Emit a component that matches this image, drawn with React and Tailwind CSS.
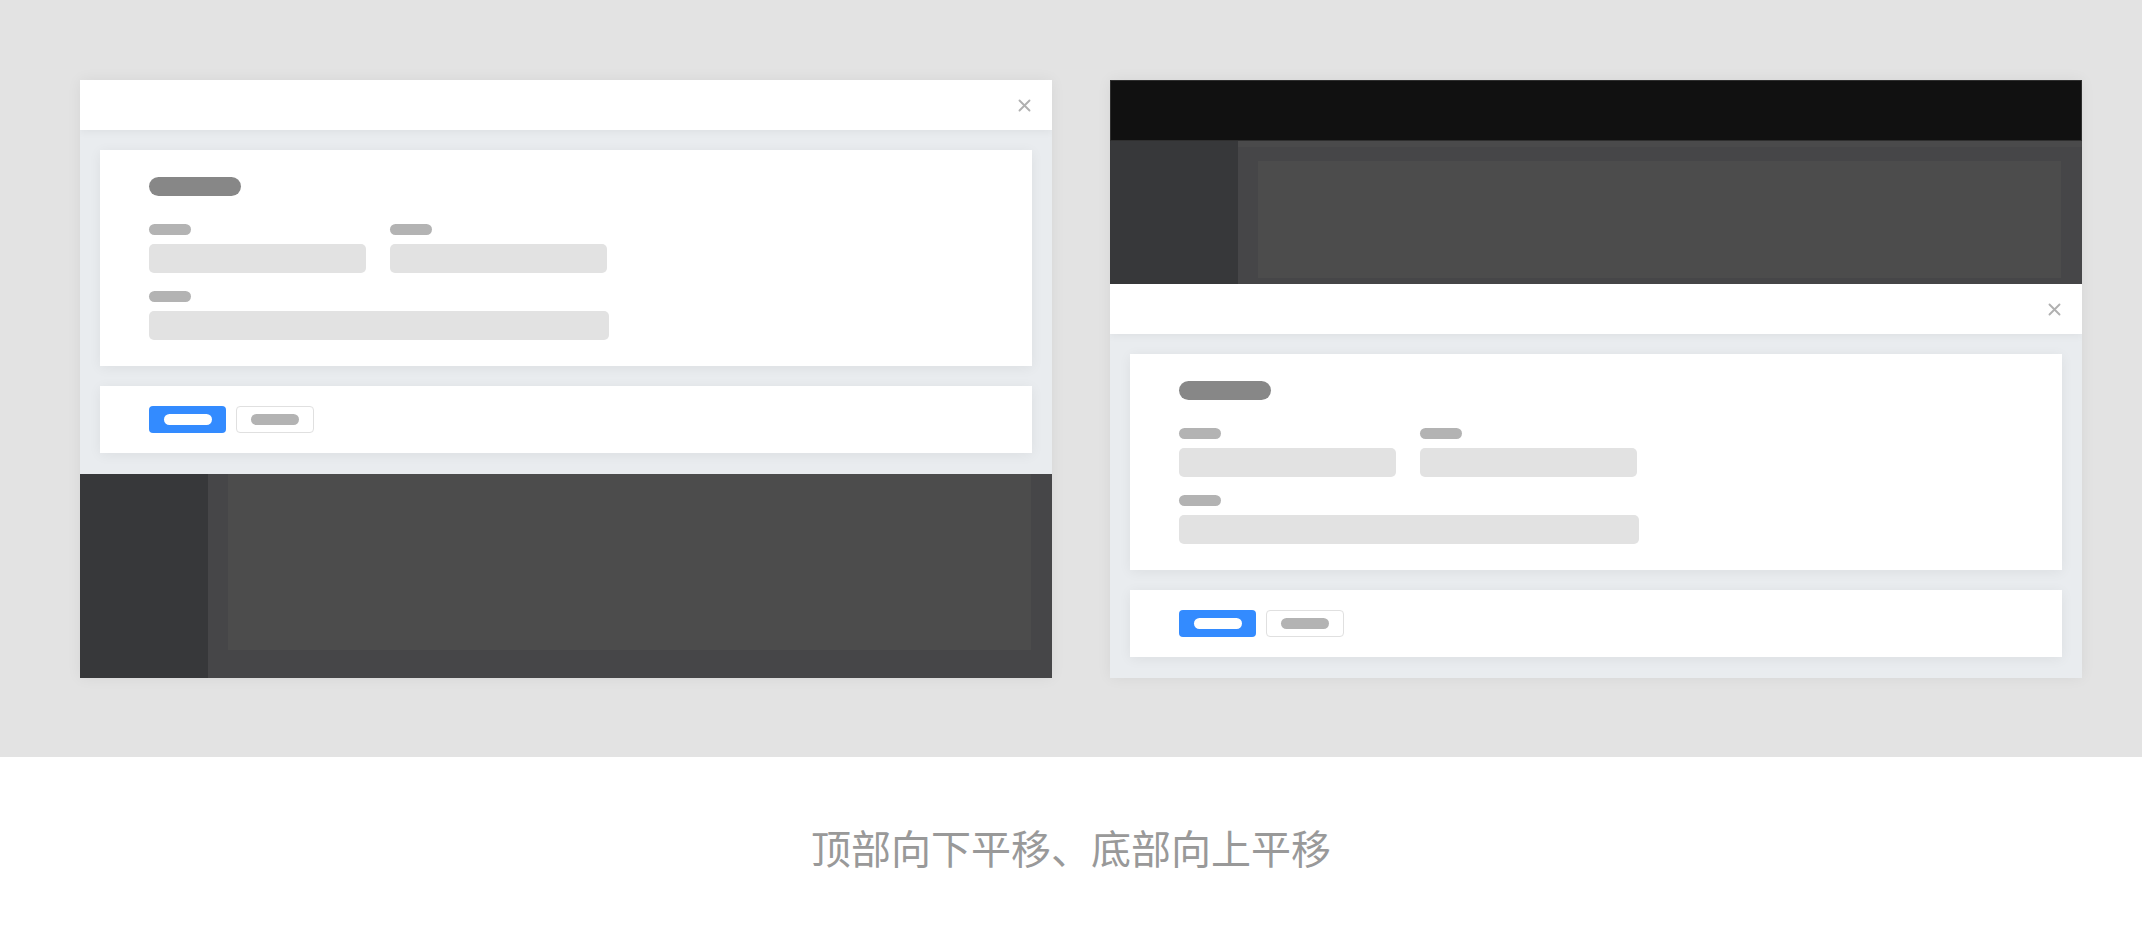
import React from "react";

function CloseIcon() {
  return (
    <svg width="13" height="13" viewBox="0 0 13 13" fill="none">
      <path d="M1.5 1.5L11.5 11.5M11.5 1.5L1.5 11.5" stroke="#b0b0b0" strokeWidth="1.9" strokeLinecap="round" />
    </svg>
  );
}

function Field({ wide }) {
  return (
    <div className="flex flex-col gap-[9px]">
      <div className="w-[42px] h-[11px] rounded-full bg-[#b3b3b3]" />
      <div className={`${wide ? "w-[460px]" : "w-[217px]"} h-[29px] rounded-[5px] bg-[#e2e2e2]`} />
    </div>
  );
}

function Modal() {
  return (
    <div className="flex flex-col">
      <div className="relative z-10 h-[50px] bg-white flex items-center justify-end pr-[21px] shadow-[0_2px_8px_rgba(0,0,0,0.05)]">
        <CloseIcon />
      </div>
      <div className="bg-[#e9ecef] px-5 pt-5 pb-[21px] flex flex-col gap-5">
        <div className="h-[216px] bg-white pl-[49px] pt-[27px] shadow-[0_2px_12px_rgba(0,0,0,0.06)]">
          <div className="w-[92px] h-[19px] rounded-full bg-[#878787]" />
          <div className="mt-[28px] flex gap-[24px]">
            <Field />
            <Field />
          </div>
          <div className="mt-[18px]">
            <Field wide />
          </div>
        </div>
        <div className="h-[67px] bg-white pl-[49px] pt-[20px] flex gap-[10px] shadow-[0_2px_12px_rgba(0,0,0,0.06)]">
          <div className="w-[77px] h-[27px] rounded-[4px] bg-[#338bff] flex items-center justify-center">
            <div className="w-[48px] h-[11px] rounded-full bg-white" />
          </div>
          <div className="w-[78px] h-[27px] rounded-[4px] border border-[#e0e0e0] bg-white flex items-center justify-center">
            <div className="w-[48px] h-[11px] rounded-full bg-[#b3b3b3]" />
          </div>
        </div>
      </div>
    </div>
  );
}

// Lower part of the dimmed app: sidebar and main area with a content card
function AppBottom() {
  return (
    <div className="h-[204px] flex">
      <div className="w-[128px] bg-[#37383a]" />
      <div className="flex-1 bg-[#464648] pl-5 pr-[21px] pb-[28px]">
        <div className="h-full bg-[#4c4c4c]" />
      </div>
    </div>
  );
}

// Upper part of the dimmed app: black top bar, then sidebar and main area
function AppTop() {
  return (
    <div className="h-[204px] flex flex-col">
      <div className="h-[61px] bg-[#111111] border border-[#2f2f2f]" />
      <div className="flex-1 flex">
        <div className="w-[128px] bg-[#37383a]" />
        <div className="flex-1 bg-[#464648] pl-5 pr-[21px] pt-5 border-t-[6px] border-[#4a4a4b]">
          <div className="h-full bg-[#4c4c4c] -mt-[6px]" />
        </div>
      </div>
    </div>
  );
}

export default function App() {
  return (
    <div className="w-[2142px] h-[930px] flex flex-col" style={{ fontFamily: '"Noto Sans CJK SC", "Noto Sans", sans-serif' }}>
      <div className="h-[757px] bg-[#e3e3e3] pl-[80px] pt-[80px] flex gap-[58px]">
        <div className="w-[972px] h-[598px] flex flex-col overflow-hidden shadow-[0_0_14px_rgba(0,0,0,0.06)]">
          <Modal />
          <AppBottom />
        </div>
        <div className="w-[972px] h-[598px] flex flex-col overflow-hidden shadow-[0_0_14px_rgba(0,0,0,0.06)]">
          <AppTop />
          <Modal />
        </div>
      </div>
      <div className="flex-1 bg-white flex justify-center pt-[62px]">
        <span className="text-[40px] leading-[56px] text-[#999999]">顶部向下平移、底部向上平移</span>
      </div>
    </div>
  );
}
